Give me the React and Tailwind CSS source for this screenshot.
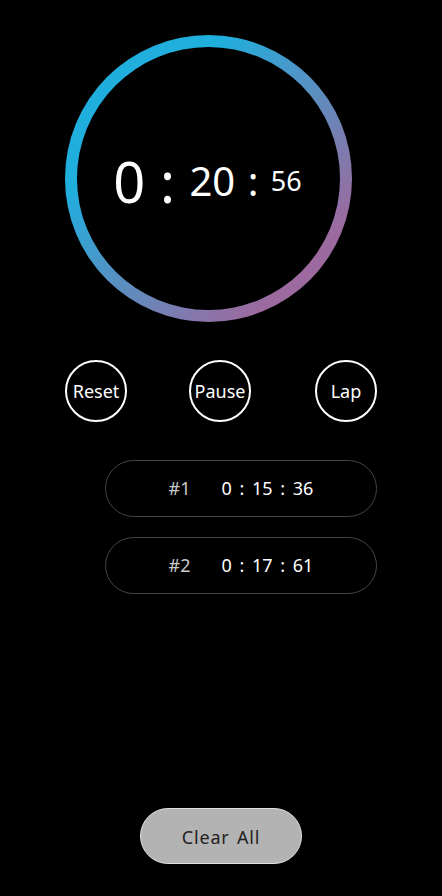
export default function App() {
  const font = { fontFamily: '"Noto Sans", "Open Sans", sans-serif' };
  return (
    <div className="w-[442px] h-[896px] bg-black flex flex-col text-white" style={font}>
      <div className="ml-[65px] mt-[35px] w-[287px] h-[287px] rounded-full p-[12px] bg-[linear-gradient(135deg,#20aedd_28%,#9d6a9f_82%)]">
        <div className="w-full h-full rounded-full bg-black flex items-center justify-center">
          <div className="flex items-center leading-none whitespace-pre mt-[4px] ml-[-2px]">
            <span className="text-[56px]">0 : </span>
            <span className="text-[40px]">20<span className="ml-[2px]"> : </span></span>
            <span className="text-[27px] ml-[2px]">56</span>
          </div>
        </div>
      </div>

      <div className="mt-[38px] ml-[65px] flex">
        <button className="w-[62px] h-[62px] rounded-full border-2 border-white flex items-center justify-center text-[18px] text-white whitespace-nowrap">Reset</button>
        <button className="ml-[62px] w-[62px] h-[62px] rounded-full border-2 border-white flex items-center justify-center text-[18px] text-white whitespace-nowrap">Pause</button>
        <button className="ml-[64px] w-[62px] h-[62px] rounded-full border-2 border-white flex items-center justify-center text-[18px] text-white whitespace-nowrap">Lap</button>
      </div>

      <div className="mt-[38px] ml-[105px] flex flex-col gap-[20px]">
        {[["#1", "0 : 15 : 36"], ["#2", "0 : 17 : 61"]].map(([n, t]) => (
          <div key={n} className="w-[272px] h-[57px] rounded-full border border-[#444] flex items-center justify-center gap-[31px] text-[18px]">
            <span className="text-[#c8c8c8]">{n}</span>
            <span className="text-white [word-spacing:3px]">{t}</span>
          </div>
        ))}
      </div>

      <button className="mt-auto mb-[32px] ml-[140px] w-[162px] h-[56px] rounded-full bg-[#b3b3b3] border border-[#e0e0e0] text-[#222] text-[18px] tracking-[0.8px] [word-spacing:2px] flex items-center justify-center pt-[2px]">Clear All</button>
    </div>
  );
}
